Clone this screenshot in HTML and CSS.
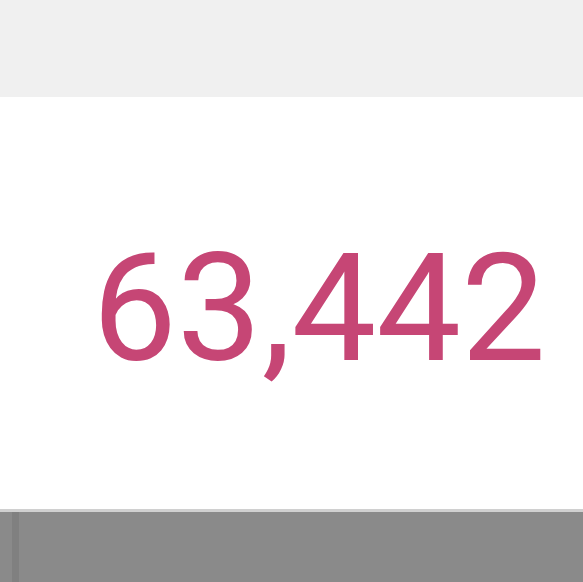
FILE: index.html
```html
<!DOCTYPE html>
<html>
<head>
<meta charset="utf-8">
<link rel="stylesheet" href="styles.css">
</head>
<body>
<div class="page">
  <div class="topbar"></div>
  <div class="card">
    <div class="value">63,442</div>
  </div>
  <div class="footer">
    <div class="stripe"></div>
  </div>
</div>
</body>
</html>
```

FILE: styles.css
```css
html, body {
  margin: 0;
  padding: 0;
  background: #ffffff;
}
.page {
  width: 583px;
  height: 582px;
  display: flex;
  flex-direction: column;
  overflow: hidden;
}
.topbar {
  height: 97px;
  background: #f0f0f0;
  box-shadow: 0 1px 3px rgba(0,0,0,0.05);
}
.card {
  height: 412px;
  background: #ffffff;
  display: flex;
  align-items: center;
  justify-content: flex-end;
  padding-right: 37px;
}
.value {
  font-family: Roboto, "Liberation Sans", sans-serif;
  font-size: 151px;
  line-height: 1;
  color: #c64675;
  margin-top: 10px;
}
.footer {
  flex: 1;
  background: #8a8a8a;
  border-top: 3px solid #d0d0d0;
  display: flex;
  padding-left: 12px;
}
.stripe {
  width: 7px;
  background: #808080;
}
```
